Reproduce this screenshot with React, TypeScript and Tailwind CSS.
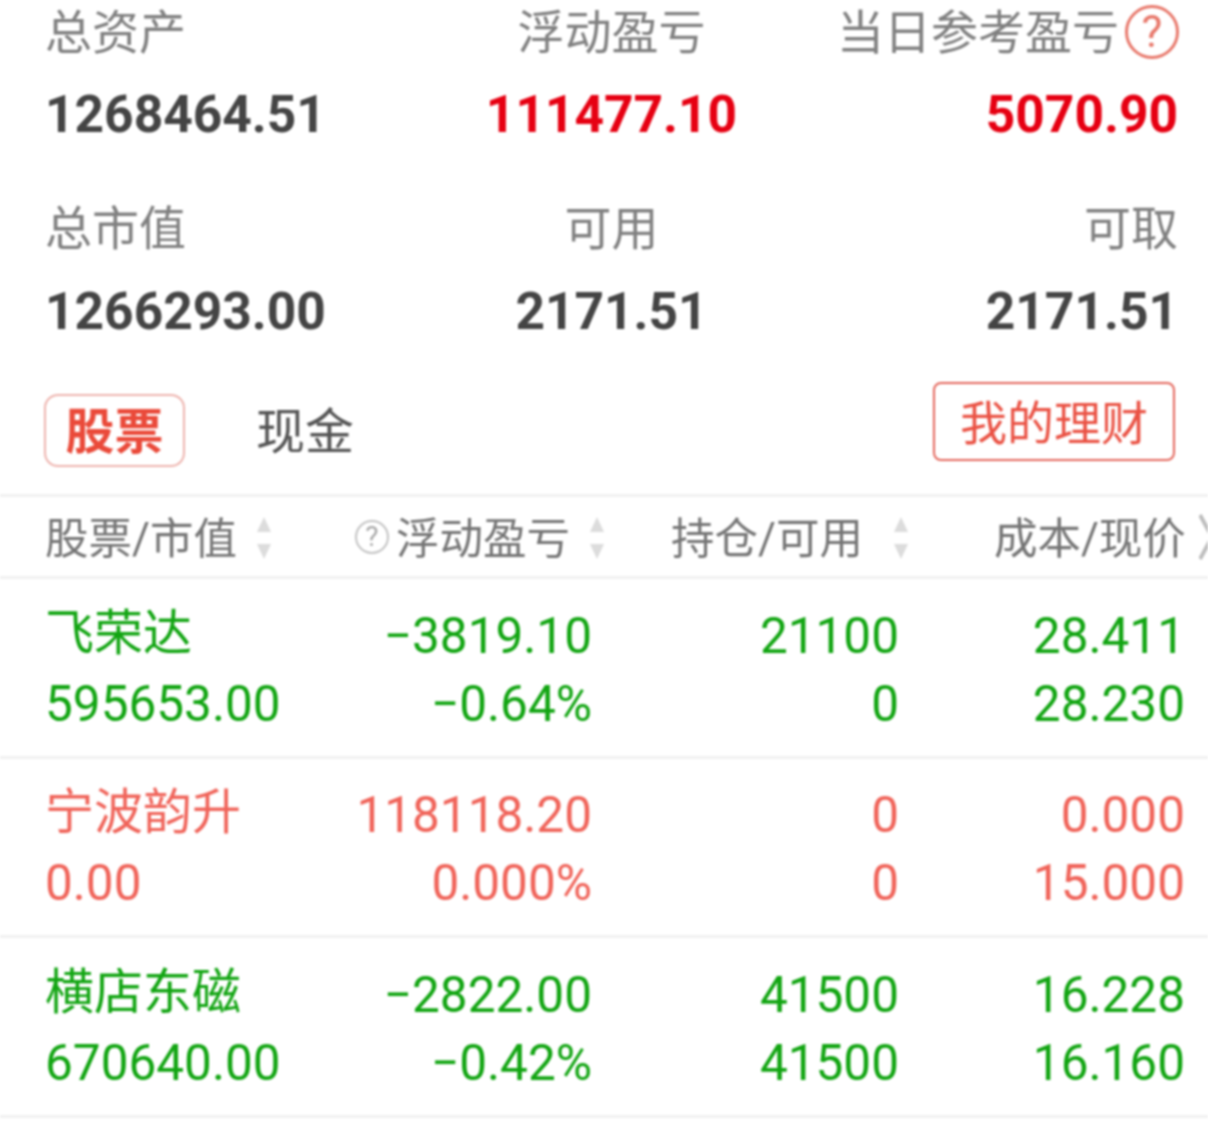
const font = "font-['Roboto','Noto_Sans_CJK_SC',sans-serif]";

const summary = [
  [
    { label: "总资产", value: "1268464.51", tone: "text-[#444444]", align: "items-start" },
    { label: "浮动盈亏", value: "111477.10", tone: "text-[#e60012]", align: "items-center" },
    { label: "当日参考盈亏", value: "5070.90", tone: "text-[#e60012]", align: "items-end", help: true },
  ],
  [
    { label: "总市值", value: "1266293.00", tone: "text-[#444444]", align: "items-start" },
    { label: "可用", value: "2171.51", tone: "text-[#444444]", align: "items-center" },
    { label: "可取", value: "2171.51", tone: "text-[#444444]", align: "items-end" },
  ],
];

const GREEN = "text-[#12a512]";
const RED = "text-[#f0645a]";

const positions = [
  { name: "飞荣达", value: "595653.00", pnl: "−3819.10", pct: "−0.64%", hold: "21100", avail: "0", cost: "28.411", price: "28.230", tone: GREEN },
  { name: "宁波韵升", value: "0.00", pnl: "118118.20", pct: "0.000%", hold: "0", avail: "0", cost: "0.000", price: "15.000", tone: RED },
  { name: "横店东磁", value: "670640.00", pnl: "−2822.00", pct: "−0.42%", hold: "41500", avail: "41500", cost: "16.228", price: "16.160", tone: GREEN },
];

function SortArrows({ className }: { className?: string }) {
  return (
    <svg width="16" height="42" viewBox="0 0 16 42" className={className} fill="#dcdcdc">
      <path d="M8 0 L15 15 L1 15 Z" />
      <path d="M1 27 L15 27 L8 42 Z" />
    </svg>
  );
}

export default function App() {
  return (
    <div className={`h-[1132px] w-[1208px] overflow-hidden bg-white blur-[0.8px] ${font}`}>
      {/* Summary */}
      <div className="pl-[45px] pr-[30px]">
        {summary.map((row, i) => (
          <div key={i} className={`grid grid-cols-3 ${i === 1 ? "mt-[32px]" : ""}`}>
            {row.map((cell) => (
              <div key={cell.label} className={`flex flex-col ${cell.align}`}>
                <div className="flex h-[64px] items-center text-[47px] leading-none text-[#808080]">
                  {cell.label}
                  {cell.help && (
                    <span className="ml-[6px] -mr-[1px] -mt-[1px] flex h-[54px] w-[54px] items-center justify-center rounded-full border-[3px] border-[#e8796c] text-[44px] text-[#e8796c]">
                      ?
                    </span>
                  )}
                </div>
                <div className={`flex h-[100px] items-center ${i === 1 ? "pt-[4px]" : "pt-[2px]"} text-[51.5px] font-bold leading-none ${cell.tone}`}>
                  {cell.value}
                </div>
              </div>
            ))}
          </div>
        ))}
      </div>

      {/* Tabs */}
      <div className="flex h-[134px] items-start pl-[44px] pr-[33px]">
        <div className="mt-[34px] flex h-[73px] w-[141px] items-center justify-center rounded-[14px] border-2 border-[#eeb4ae] pt-[4px] text-[49px] font-bold leading-none text-[#ea4a3a]">
          股票
        </div>
        <div className="ml-[71px] mt-[34px] flex h-[73px] items-center pt-[4px] text-[49px] leading-none text-[#555555]">现金</div>
        <div className="ml-auto mt-[22px] flex h-[79px] w-[242px] items-center justify-center rounded-[8px] border-2 border-[#e4675c] pt-[3px] text-[47px] leading-none text-[#ea5244]">
          我的理财
        </div>
      </div>

      {/* Table header */}
      <div className="flex h-[85px] items-center overflow-hidden border-y-[3px] border-[#f1f1f1] pl-[45px] text-[43.5px] leading-none text-[#757575]">
        <span className="whitespace-nowrap pt-[7px]">股票/市值</span>
        <SortArrows className="ml-[19px] mt-[2px] shrink-0" />
        <span className="ml-[83px] flex h-[34px] w-[34px] shrink-0 items-center justify-center rounded-full border-2 border-[#c4c4c4] text-[28px] text-[#a8a8a8]">?</span>
        <span className="ml-[7px] whitespace-nowrap pt-[7px]">浮动盈亏</span>
        <SortArrows className="ml-[19px] mt-[2px] shrink-0" />
        <span className="ml-[66px] whitespace-nowrap pt-[7px]">持仓/可用</span>
        <SortArrows className="ml-[30px] mt-[2px] shrink-0" />
        <span className="ml-[85px] whitespace-nowrap pt-[7px]">成本/现价</span>
        <svg width="14" height="48" viewBox="0 0 14 48" className="ml-[13px] shrink-0" fill="none" stroke="#bdbdbd" strokeWidth="4">
          <path d="M1 2 L13 24 L1 46" />
        </svg>
      </div>

      {/* Rows */}
      {positions.map((p) => (
        <div
          key={p.name}
          className={`grid h-[179.5px] grid-cols-[255px_292px_307px_286px] content-center gap-y-[18px] border-b-[3px] border-[#f1f1f1] pl-[45px] pt-[5px] text-[49.5px] leading-[50px] ${p.tone}`}
        >
          <div className="-mt-[2px] text-[49px]">{p.name}</div>
          <div className="text-right">{p.pnl}</div>
          <div className="text-right">{p.hold}</div>
          <div className="text-right">{p.cost}</div>
          <div>{p.value}</div>
          <div className="text-right">{p.pct}</div>
          <div className="text-right">{p.avail}</div>
          <div className="text-right">{p.price}</div>
        </div>
      ))}
    </div>
  );
}
